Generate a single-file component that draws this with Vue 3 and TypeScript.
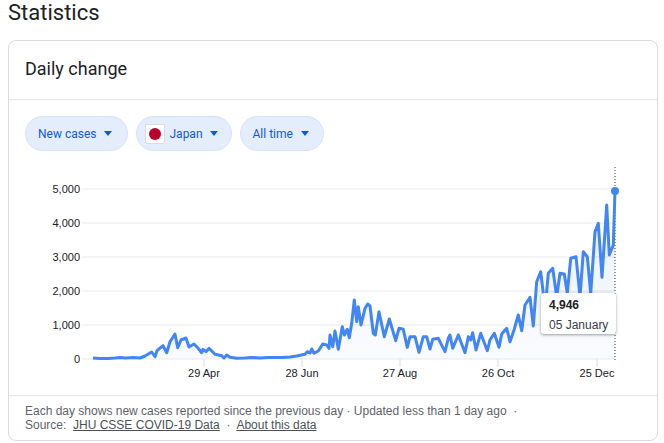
<script setup lang="ts">
const pts: [number, number][] = [
  [93,358],[100,358.5],[108,358.5],[115,358],[120,357.5],[126,358],[133,357.5],[140,358],[145,356],[151.7,352],[155,356.7],[157,350.7],[163,345.7],[166.7,352.7],[170,341.7],[175,334],[177.7,347.7],[181,340],[186,338],[189,347],[194,344],[197.7,347.7],[201.7,352.7],[203,349.3],[206,351.7],[209,348.3],[215,354.3],[221.7,355.7],[224,358],[226.7,355],[230,357.3],[236.7,358.3],[245,358],[252,357.5],[260,358],[268,357.5],[275,357.5],[282,357.5],[290,357],[296.7,356],[305,354.3],[307.3,351.7],[310,353],[311.7,349],[314,353.3],[318.3,351],[322.7,344],[326.7,345],[329,348.3],[330,335],[332.7,346.7],[335,331],[338.3,349.3],[342.3,326.7],[344.3,335],[347.3,329.3],[349.3,337.7],[351.7,323.3],[354.3,300],[356.7,321.7],[358.3,306.7],[361,325],[365,308.3],[367.7,304],[370,306],[373.3,333.3],[375.3,335],[379,311.7],[384.3,336.7],[389.3,319],[395.7,340.7],[399,328.3],[403.3,329.3],[407.3,347.3],[410,336.7],[415,336.7],[419,352.3],[423.3,336.7],[426.7,336.7],[430,349],[432.7,339.3],[438.3,338.3],[443.3,348.3],[445,351.7],[448.3,338.3],[450,335],[452.7,348.3],[458.3,335],[465,352.7],[468.3,336.7],[470.7,340],[472.7,332.7],[476,350],[480.7,333.3],[487.3,350.7],[490,340],[494.3,333.3],[499,347.3],[501.7,334],[506.7,328.3],[510,341.7],[514,330],[518.3,315],[521.7,330.7],[525,305],[530,297.3],[533.3,326],[536.7,281.7],[540.7,271.7],[543.3,293.3],[545,310],[548.3,273.3],[552.7,268.3],[556.7,296.7],[560,273.3],[564.3,274],[567.3,293.3],[570.7,258.3],[576,256.7],[580,296.7],[583.3,251.7],[587.3,256.7],[590.7,293.3],[595,231.7],[598.3,223.3],[602,277.3],[606.7,205],[609.3,255],[613.3,245],[615,190.7]
];
// The chart box starts at x=9, y=151 on the page.
const ox = 9;
const oy = 151;
const line = pts.map(([x, y]) => `${x - ox},${y - oy}`).join(" ");
const area = `${93 - ox},${359 - oy} ${line} ${615 - ox},${359 - oy}`;
const grid = [
  { label: "5,000", y: 38 },
  { label: "4,000", y: 72 },
  { label: "3,000", y: 106 },
  { label: "2,000", y: 140 },
  { label: "1,000", y: 174 },
  { label: "0", y: 208 },
];
const ticks = [
  { label: "29 Apr", x: 195 },
  { label: "28 Jun", x: 293 },
  { label: "27 Aug", x: 391 },
  { label: "26 Oct", x: 489 },
  { label: "25 Dec", x: 588 },
];
</script>

<template>
  <main class="page">
    <h1 class="title">Statistics</h1>
    <section class="card">
      <h2 class="card-title">Daily change</h2>
      <div class="filters">
        <button class="pill pill-cases">New cases<span class="caret"></span></button>
        <button class="pill pill-flag">
          <span class="flag"><span class="sun"></span></span>Japan<span class="caret"></span>
        </button>
        <button class="pill">All time<span class="caret"></span></button>
      </div>
      <div class="chart">
        <svg width="648" height="244" viewBox="0 0 648 244">
          <defs>
            <linearGradient id="fade" x1="0" y1="0" x2="0" y2="1">
              <stop offset="0" stop-color="#4285f4" stop-opacity="0.12" />
              <stop offset="1" stop-color="#4285f4" stop-opacity="0.03" />
            </linearGradient>
          </defs>
          <g v-for="g in grid" :key="g.label">
            <line x1="73" x2="606" :y1="g.y" :y2="g.y" stroke="#f4f4f5" stroke-width="2" />
            <text x="71" :y="g.y + 4" text-anchor="end" class="axis">{{ g.label }}</text>
          </g>
          <g v-for="t in ticks" :key="t.label">
            <line :x1="t.x" :x2="t.x" y1="208" y2="216" stroke="#dadce0" />
            <text :x="t.x" y="226" text-anchor="middle" class="axis">{{ t.label }}</text>
          </g>
          <polygon :points="area" fill="url(#fade)" />
          <line x1="606" x2="606" y1="16" y2="209" stroke="#3c4043" stroke-dasharray="1 2" />
          <polyline :points="line" fill="none" stroke="#4285f4" stroke-width="3" stroke-linejoin="round" />
          <circle cx="606" cy="40" r="4" fill="#4285f4" />
        </svg>
        <div class="tip">
          <strong>4,946</strong>
          <span>05 January</span>
        </div>
      </div>
      <footer class="foot">
        <div>Each day shows new cases reported since the previous day · Updated less than 1 day ago &nbsp;·</div>
        <div>Source: &nbsp;<a>JHU CSSE COVID-19 Data</a> &nbsp;·&nbsp; <a>About this data</a></div>
      </footer>
    </section>
  </main>
</template>

<style scoped>
.page {
  width: 664px;
  height: 443px;
  padding: 0 6px 0 8px;
  box-sizing: border-box;
  overflow: hidden;
  background: #fff;
  font-family: Roboto, "Liberation Sans", sans-serif;
}
.title {
  margin: 0;
  height: 40px;
  font-size: 22px;
  line-height: 26px;
  font-weight: 400;
  color: #202124;
}
.card {
  height: 401px;
  box-sizing: border-box;
  border: 1px solid #dadce0;
  border-radius: 8px;
}
.card-title {
  margin: 0;
  height: 59px;
  padding-left: 16px;
  font-size: 18px;
  line-height: 56px;
  font-weight: 400;
  color: #202124;
  border-bottom: 1px solid #e4e5e7;
  box-sizing: border-box;
}
.filters {
  display: flex;
  gap: 8px;
  padding: 16px 16px 0;
  height: 35px;
}
.pill {
  display: flex;
  align-items: center;
  height: 35px;
  padding: 0 14px 0 12px;
  gap: 8px;
  box-sizing: border-box;
  border: 1px solid #d5e3fa;
  border-radius: 18px;
  background: #e3edfc;
  color: #1558d6;
  font: 400 12px Roboto, "Liberation Sans", sans-serif;
}
.pill-cases {
  padding-right: 15px;
}
.pill-flag {
  padding: 0 13px 0 8px;
  gap: 0;
}
.caret {
  width: 0;
  height: 0;
  border-left: 4.5px solid transparent;
  border-right: 4.5px solid transparent;
  border-top: 5px solid #1558d6;
}
.pill-flag .caret {
  margin-left: 7px;
}
.flag {
  display: flex;
  align-items: center;
  justify-content: center;
  width: 20px;
  height: 20px;
  margin-right: 4px;
  box-sizing: border-box;
  background: #fff;
  border: 1px solid #dadce0;
  border-radius: 2px;
}
.sun {
  width: 12px;
  height: 12px;
  border-radius: 50%;
  background: #bc002d;
}
.chart {
  position: relative;
  height: 244px;
}
.chart svg {
  display: block;
}
.axis {
  font: 11px "Liberation Sans", Arial, sans-serif;
  fill: #202124;
}
.tip {
  position: absolute;
  left: 532px;
  top: 142px;
  width: 75px;
  height: 41px;
  box-sizing: border-box;
  padding: 5px 8px;
  display: flex;
  flex-direction: column;
  gap: 5px;
  background: #fff;
  border-radius: 3px;
  box-shadow: 0 1px 3px rgba(60, 64, 67, 0.5);
  font: 12px/15px "Liberation Sans", Arial, sans-serif;
  color: #202124;
  white-space: nowrap;
}
.tip span {
  color: #3c4043;
}
.foot {
  border-top: 1px solid #e4e5e7;
  padding: 8px 16px 0;
  font: 12px/14px "Liberation Sans", Arial, sans-serif;
  color: #5f6368;
  white-space: nowrap;
}
.foot a {
  color: #4d5156;
  text-decoration: underline;
}
</style>
